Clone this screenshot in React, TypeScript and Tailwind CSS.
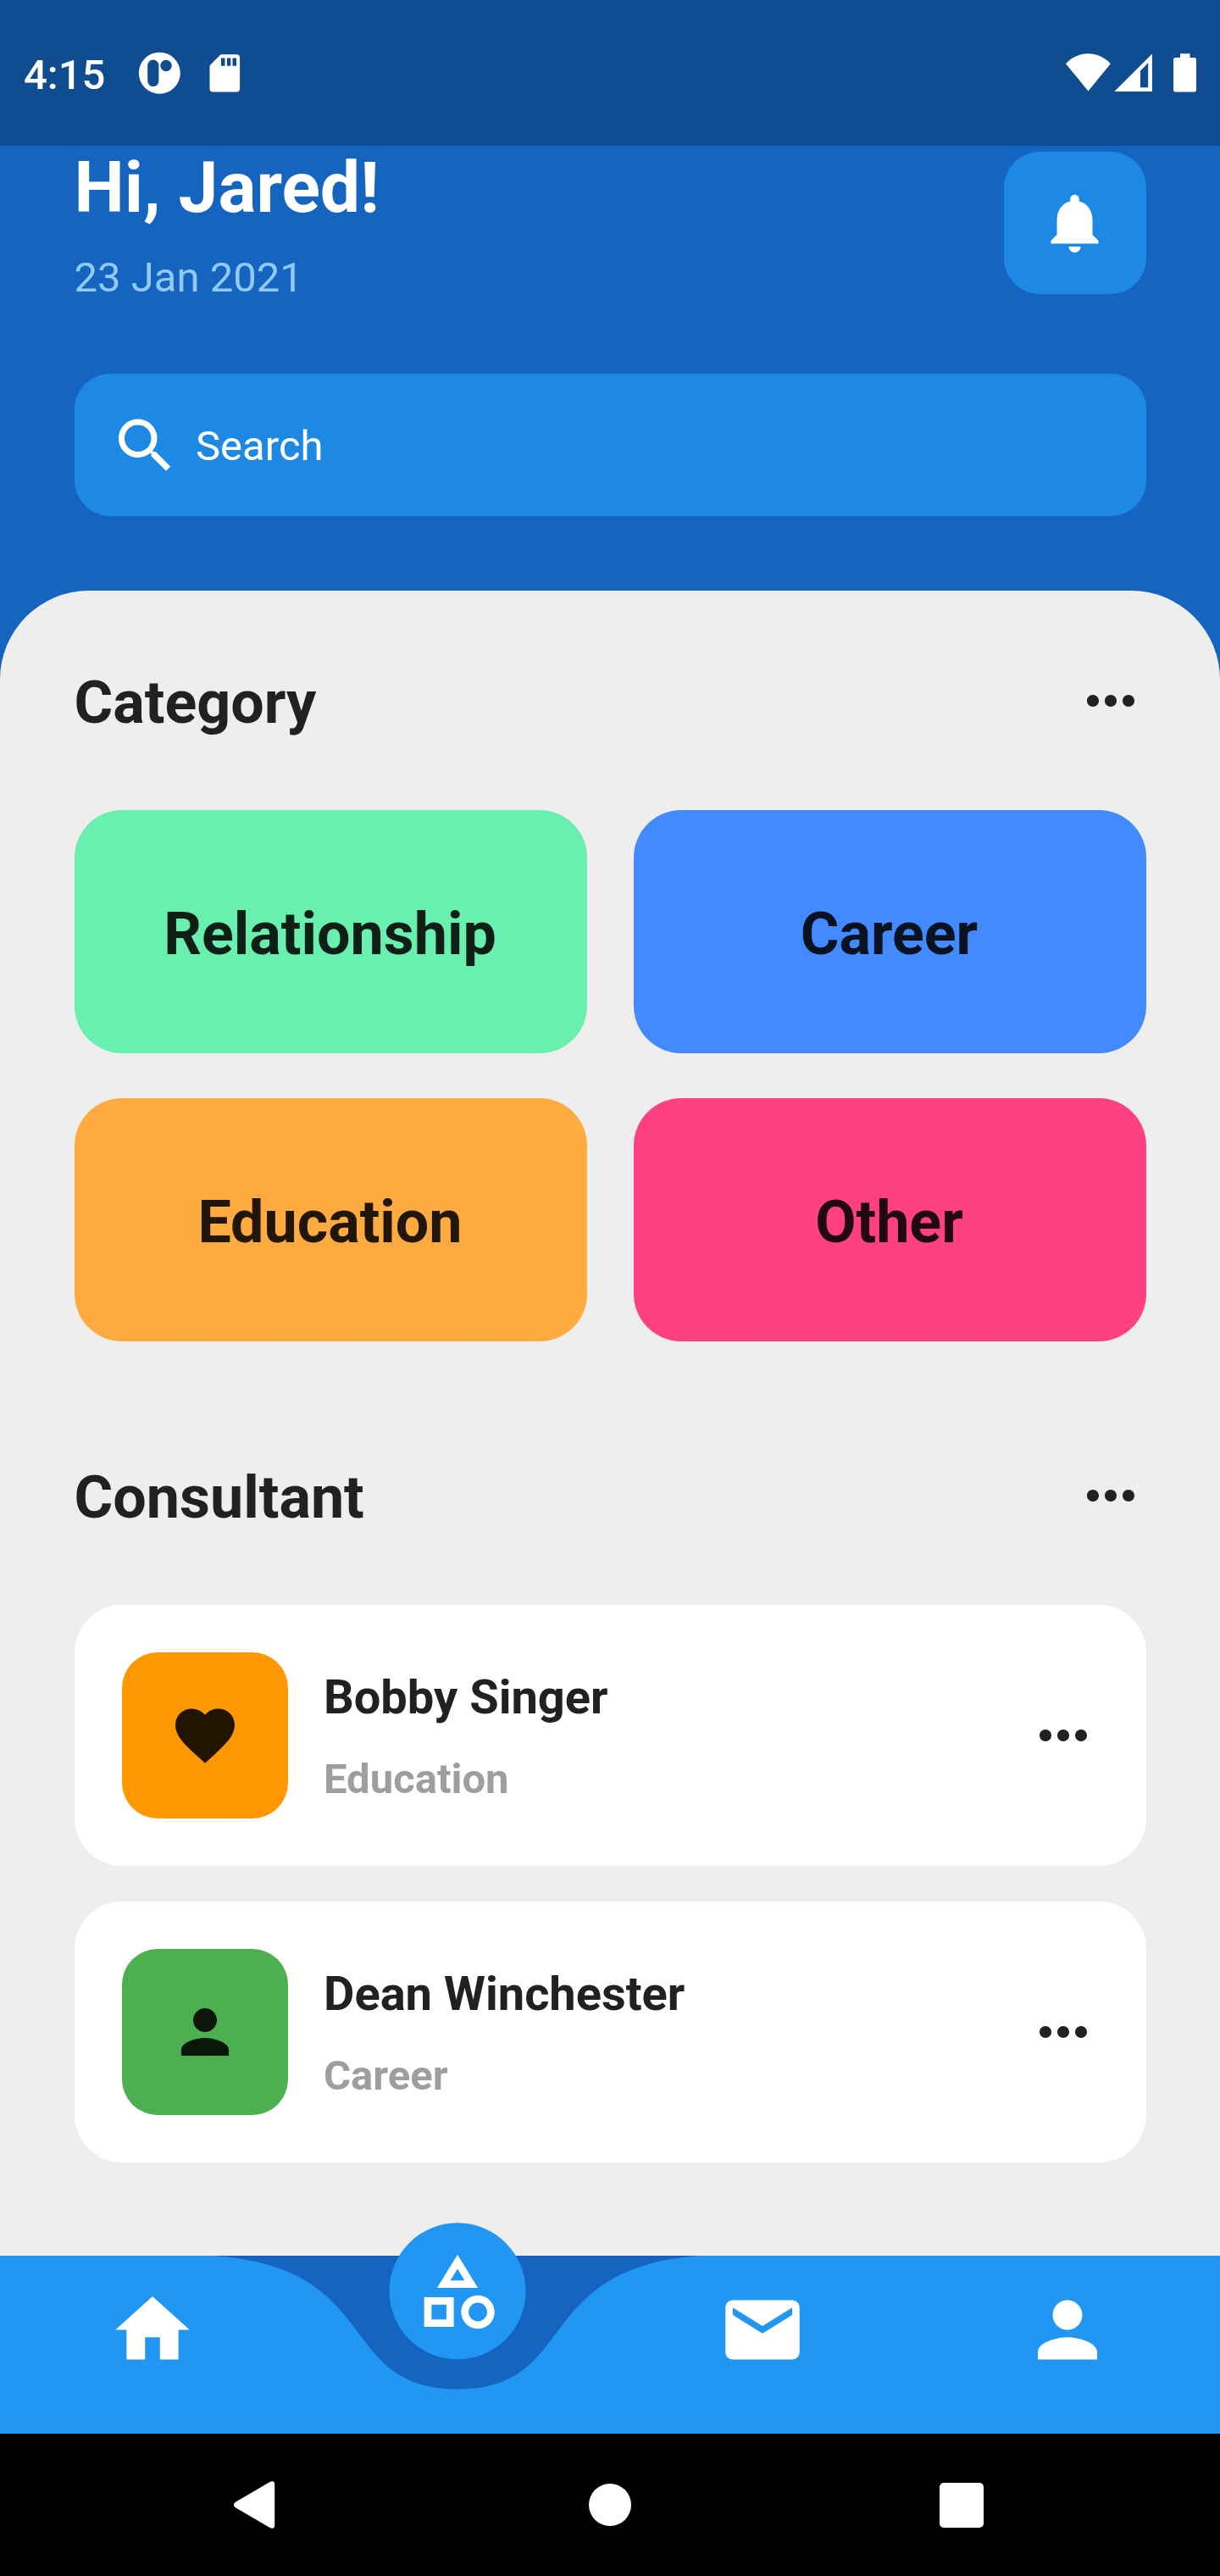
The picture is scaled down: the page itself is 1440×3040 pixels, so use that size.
import React from 'react';

type IconProps = { d: string; className?: string; viewBox?: string };

const Icon = ({ d, className = 'size-[84px]', viewBox = '0 0 24 24' }: IconProps) => (
  <svg viewBox={viewBox} fill="currentColor" className={`block shrink-0 ${className}`}>
    <path d={d} />
  </svg>
);

const NavIcon = ({ d }: { d: string }) => (
  <Icon d={d} viewBox="-0.1143 0 24.2286 24.2286" className="size-[106px]" />
);

const paths = {
  bell: 'M12 22c1.1 0 2-.9 2-2h-4c0 1.1.89 2 2 2zm6-6v-5c0-3.07-1.64-5.64-4.5-6.32V4c0-.83-.67-1.5-1.5-1.5s-1.5.67-1.5 1.5v.68C7.63 5.36 6 7.92 6 11v5l-2 2v1h16v-1l-2-2z',
  search:
    'M15.5 14h-.79l-.28-.27C15.41 12.59 16 11.11 16 9.5 16 5.91 13.09 3 9.5 3S3 5.91 3 9.5 5.91 16 9.5 16c1.61 0 3.09-.59 4.23-1.57l.27.28v.79l5 4.99L20.49 19l-4.99-5zm-6 0C7.01 14 5 11.99 5 9.5S7.01 5 9.5 5 14 7.01 14 9.5 11.99 14 9.5 14z',
  more: 'M6 10c-1.1 0-2 .9-2 2s.9 2 2 2 2-.9 2-2-.9-2-2-2zm12 0c-1.1 0-2 .9-2 2s.9 2 2 2 2-.9 2-2-.9-2-2-2zm-6 0c-1.1 0-2 .9-2 2s.9 2 2 2 2-.9 2-2-.9-2-2-2z',
  heart:
    'M12 21.35l-1.45-1.32C5.4 15.36 2 12.28 2 8.5 2 5.42 4.42 3 7.5 3c1.74 0 3.41.81 4.5 2.09C13.09 3.81 14.76 3 16.5 3 19.58 3 22 5.42 22 8.5c0 3.78-3.4 6.86-8.55 11.54L12 21.35z',
  person:
    'M12 12c2.21 0 4-1.79 4-4s-1.79-4-4-4-4 1.79-4 4 1.79 4 4 4zm0 2c-2.67 0-8 1.34-8 4v2h16v-2c0-2.66-5.33-4-8-4z',
  home: 'M10 20v-6h4v6h5v-8h3L12 3 2 12h3v8z',
  mail: 'M20 4H4c-1.1 0-1.99.9-1.99 2L2 18c0 1.1.9 2 2 2h16c1.1 0 2-.9 2-2V6c0-1.1-.9-2-2-2zm0 4l-8 5-8-5V6l8 5 8-5v2z',
  shapes:
    'M12 2l-5.5 9h11L12 2zm0 3.84L13.93 9h-3.87L12 5.84zM17.5 13c-2.49 0-4.5 2.01-4.5 4.5s2.01 4.5 4.5 4.5 4.5-2.01 4.5-4.5-2.01-4.5-4.5-4.5zm0 7c-1.38 0-2.5-1.12-2.5-2.5s1.12-2.5 2.5-2.5 2.5 1.12 2.5 2.5-1.12 2.5-2.5 2.5zM3 21.5h8v-8H3v8zm2-6h4v4H5v-4z',
};

const StatusBar = () => (
  <div className="flex h-[172px] items-start justify-between bg-[#104c90] pr-7 pl-[28px] pt-[57px] text-white">
    <div className="flex">
      <span className="mt-[3px] w-[135px] text-[49px] leading-[58px] font-medium">4:15</span>
      <svg viewBox="163 57 50 58" className="h-[58px] w-[50px]" fill="white">
        <path
          fillRule="evenodd"
          d="M188.3 61.7a24.5 24.5 0 1 0 0 49a24.5 24.5 0 1 0 0-49zM180.8 70.5a6.6 6.6 0 0 1 6.6 6.6v18.4a6.6 6.6 0 0 1-13.2 0V77.1a6.6 6.6 0 0 1 6.6-6.6zM196 70.8a6.7 6.7 0 1 1 0 13.4a6.7 6.7 0 1 1 0-13.4z"
        />
      </svg>
      <svg viewBox="244 57 42 58" className="ml-[31px] h-[58px] w-[42px]" fill="white">
        <path
          fillRule="evenodd"
          d="M260.5 64.2h18.6a4 4 0 0 1 4 4v36.3a4 4 0 0 1-4 4h-27.6a4 4 0 0 1-4-4V77.5zM261 68.5v9.3h4.5v-9.3zM268 68.5v9.3h4.3v-9.3zM274.5 68.5v9.3h4.5v-9.3z"
        />
      </svg>
    </div>
    <div className="flex">
      <svg viewBox="1258 57 54 58" className="h-[58px] w-[54px]" fill="white">
        <path d="M1258 75.2C1272.5 59.4 1296.2 59.4 1310.8 75.2L1284.4 107.4z" />
      </svg>
      <svg viewBox="1314 57 48 58" className="ml-0.5 h-[58px] w-[48px]" fill="white">
        <path fillRule="evenodd" d="M1315.3 107.9L1359.9 63.5V107.9zM1346 83.5V103.3H1355.2V74.3z" />
      </svg>
      <svg viewBox="1385 57 27 58" className="ml-[23px] h-[58px] w-[27px]" fill="white">
        <path d="M1393 63.3h11.5v4.7h5a2.5 2.5 0 0 1 2.5 2.5v35.6a2.5 2.5 0 0 1-2.5 2.5h-22a2.5 2.5 0 0 1-2.5-2.5V70.5a2.5 2.5 0 0 1 2.5-2.5h5.5z" />
      </svg>
    </div>
  </div>
);

const Header = () => (
  <header className="flex h-[525px] flex-col px-[87.5px] text-white">
    <div className="flex h-[269.4px] justify-between">
      <div className="flex flex-col">
        <h1 className="text-[84px] leading-[99px] font-bold">Hi, Jared!</h1>
        <p className="mt-7 text-[49px] leading-[58px] text-[#90caf9]">23 Jan 2021</p>
      </div>
      <button className="mt-[7px] flex size-[168px] items-center justify-center rounded-[42px] bg-[#1e88e5]">
        <Icon d={paths.bell} viewBox="0.143 0 24 24" />
      </button>
    </div>
    <div className="flex h-[168px] items-center rounded-[42px] bg-[#1e88e5] px-[42px]">
      <Icon d={paths.search} viewBox="0.143 0 24 24" className="mt-px size-[84px]" />
      <span className="mt-[3px] ml-[17.5px] text-[49px] leading-[58px]">Search</span>
    </div>
  </header>
);

const SectionTitle = ({ children }: { children: React.ReactNode }) => (
  <div className="flex h-[84px] items-center justify-between">
    <h2 className="mt-1 text-[70px] leading-[82px] font-bold text-[#212121]">{children}</h2>
    <Icon d={paths.more} />
  </div>
);

const categories = [
  { name: 'Relationship', className: 'bg-[#69f0ae]' },
  { name: 'Career', className: 'bg-[#448aff]' },
  { name: 'Education', className: 'bg-[#ffab40]' },
  { name: 'Other', className: 'bg-[#ff4081]' },
];

const consultants = [
  { name: 'Bobby Singer', field: 'Education', icon: paths.heart, className: 'bg-[#ff9800]' },
  { name: 'Dean Winchester', field: 'Career', icon: paths.person, className: 'bg-[#4caf50]' },
];

const navSlot = 'relative flex w-[360px] justify-center pt-[35px]';

const BottomNav = () => (
  <nav className="relative flex h-[210px] bg-[#1565c0] text-white">
    <svg viewBox="0 0 1440 210" className="absolute inset-0 h-[210px] w-[1440px] overflow-visible" fill="#2196f3">
      <path d="M0 0H252C453.6 13.125 396 157.5 540 157.5S626.4 13.125 828 0H1440V210H0z" />
      <circle cx="540" cy="41.8" r="80.5" />
    </svg>
    <div className={navSlot}>
      <NavIcon d={paths.home} />
    </div>
    <div className="relative flex w-[360px] justify-center">
      <div className="-mt-[10px]">
        <NavIcon d={paths.shapes} />
      </div>
    </div>
    <div className={navSlot}>
      <NavIcon d={paths.mail} />
    </div>
    <div className={navSlot}>
      <NavIcon d={paths.person} />
    </div>
  </nav>
);

const SystemNav = () => (
  <div className="flex h-[168px] items-center bg-black">
    <svg viewBox="0 0 50 58" className="ml-[275px] h-[58px] w-[50px]" fill="white">
      <path d="M2.5 26L43.5 2Q49.2-0.5 49.2 5V53Q49.2 58.5 43.5 56L2.5 32Q-0.8 29 2.5 26z" />
    </svg>
    <div className="ml-[370px] size-[50px] rounded-full bg-white" />
    <div className="ml-[364px] h-[53px] w-[52px] rounded-[5px] bg-white" />
  </div>
);

export default function App() {
  return (
    <div className="flex h-[3040px] w-[1440px] flex-col overflow-hidden bg-[#1565c0] font-['Roboto',sans-serif]">
      <StatusBar />
      <Header />
      <main className="h-[1965px] rounded-t-[105px] bg-[#eeeeee] px-[87.5px] pt-[88px] text-[#212121]">
        <SectionTitle>Category</SectionTitle>
        <div className="mt-[87px] grid grid-cols-2 gap-x-[55px] gap-y-[53px]">
          {categories.map((c) => (
            <div
              key={c.name}
              className={`flex h-[287px] items-center justify-center rounded-[56px] ${c.className}`}
            >
              <span className="mt-[5px] mr-px text-[70px] leading-[82px] font-bold text-black/87">{c.name}</span>
            </div>
          ))}
        </div>
        <div className="mt-[140px]">
          <SectionTitle>Consultant</SectionTitle>
        </div>
        <div className="mt-[87px] flex flex-col gap-[42px]">
          {consultants.map((c) => (
            <div key={c.name} className="flex h-[308px] items-center rounded-[56px] bg-white px-14">
              <div className={`flex size-[196px] items-center justify-center rounded-[42px] ${c.className}`}>
                <Icon d={c.icon} className="size-[84px] text-black/87" />
              </div>
              <div className="mt-[3px] ml-[42.5px] flex flex-1 flex-col">
                <h3 className="text-[56px] leading-[66px] font-bold">{c.name}</h3>
                <p className="mt-[35px] text-[49px] leading-[58px] font-bold text-[#9e9e9e]">{c.field}</p>
              </div>
              <Icon d={paths.more} />
            </div>
          ))}
        </div>
      </main>
      <BottomNav />
      <SystemNav />
    </div>
  );
}
